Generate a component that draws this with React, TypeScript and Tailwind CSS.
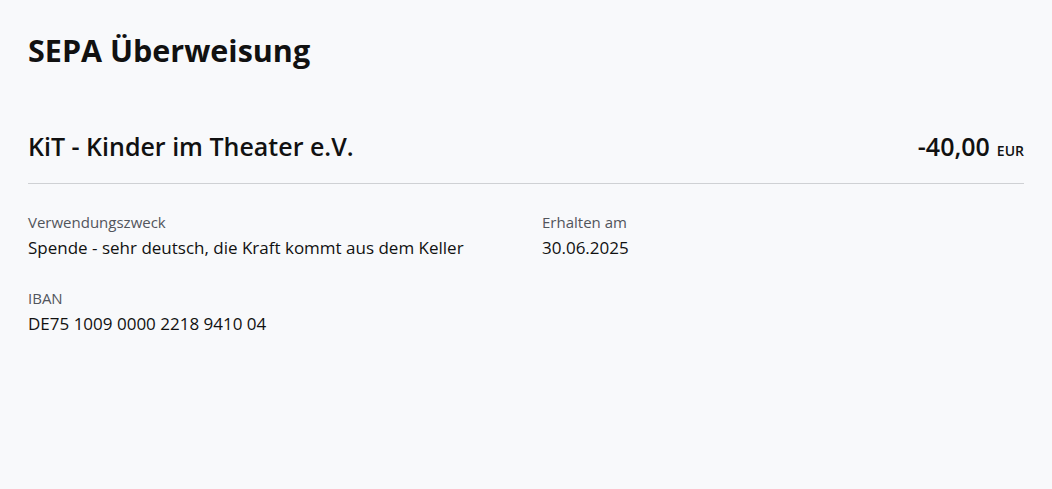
import React from 'react';

const Field = ({ label, value }: { label: string; value: string }) => (
    <div className="flex flex-col">
        <span className="text-[15px] leading-[20px] text-[#52555c]">{label}</span>
        <span className="text-[17px] leading-[24px] text-[#111] mt-[4px]">{value}</span>
    </div>
);

export default function App() {
    return (
        <div className="min-h-screen bg-[#f8f9fb] px-[28px] pt-[30px] text-[#111] font-['Open_Sans',sans-serif]">
            <h1 className="text-[30.5px] leading-[40px] font-bold">SEPA Überweisung</h1>

            <div className="mt-[60px] flex items-baseline justify-between border-b border-[#cfd1d4] pb-[21px]">
                <h2 className="text-[25px] leading-[32px] font-semibold">KiT - Kinder im Theater e.V.</h2>
                <div className="flex items-baseline gap-[7px]">
                    <span className="text-[25px] leading-[32px] font-semibold">-40,00</span>
                    <span className="text-[14px] font-semibold">EUR</span>
                </div>
            </div>

            <div className="mt-[28px] grid grid-cols-2 gap-x-8 gap-y-[28px]">
                <Field label="Verwendungszweck" value="Spende - sehr deutsch, die Kraft kommt aus dem Keller" />
                <Field label="Erhalten am" value="30.06.2025" />
                <Field label="IBAN" value="DE75 1009 0000 2218 9410 04" />
            </div>
        </div>
    );
}
